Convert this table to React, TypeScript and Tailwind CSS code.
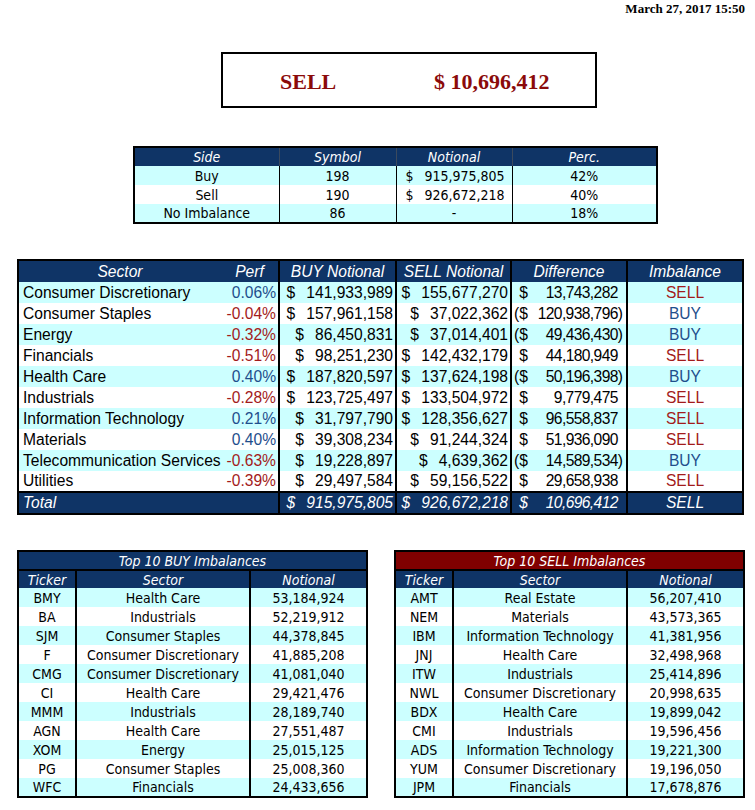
import React from "react";

type SectorRow = {
  sector: string;
  perf: string;
  buy: string;
  sell: string;
  diff: string;
  neg: boolean;
  side: "BUY" | "SELL";
};

const sectors: SectorRow[] = [
  { sector: "Consumer Discretionary", perf: "0.06%", buy: "141,933,989", sell: "155,677,270", diff: "13,743,282", neg: false, side: "SELL" },
  { sector: "Consumer Staples", perf: "-0.04%", buy: "157,961,158", sell: "37,022,362", diff: "120,938,796", neg: true, side: "BUY" },
  { sector: "Energy", perf: "-0.32%", buy: "86,450,831", sell: "37,014,401", diff: "49,436,430", neg: true, side: "BUY" },
  { sector: "Financials", perf: "-0.51%", buy: "98,251,230", sell: "142,432,179", diff: "44,180,949", neg: false, side: "SELL" },
  { sector: "Health Care", perf: "0.40%", buy: "187,820,597", sell: "137,624,198", diff: "50,196,398", neg: true, side: "BUY" },
  { sector: "Industrials", perf: "-0.28%", buy: "123,725,497", sell: "133,504,972", diff: "9,779,475", neg: false, side: "SELL" },
  { sector: "Information Technology", perf: "0.21%", buy: "31,797,790", sell: "128,356,627", diff: "96,558,837", neg: false, side: "SELL" },
  { sector: "Materials", perf: "0.40%", buy: "39,308,234", sell: "91,244,324", diff: "51,936,090", neg: false, side: "SELL" },
  { sector: "Telecommunication Services", perf: "-0.63%", buy: "19,228,897", sell: "4,639,362", diff: "14,589,534", neg: true, side: "BUY" },
  { sector: "Utilities", perf: "-0.39%", buy: "29,497,584", sell: "59,156,522", diff: "29,658,938", neg: false, side: "SELL" },
];

const topBuy = [
  ["BMY", "Health Care", "53,184,924"],
  ["BA", "Industrials", "52,219,912"],
  ["SJM", "Consumer Staples", "44,378,845"],
  ["F", "Consumer Discretionary", "41,885,208"],
  ["CMG", "Consumer Discretionary", "41,081,040"],
  ["CI", "Health Care", "29,421,476"],
  ["MMM", "Industrials", "28,189,740"],
  ["AGN", "Health Care", "27,551,487"],
  ["XOM", "Energy", "25,015,125"],
  ["PG", "Consumer Staples", "25,008,360"],
  ["WFC", "Financials", "24,433,656"],
];

const topSell = [
  ["AMT", "Real Estate", "56,207,410"],
  ["NEM", "Materials", "43,573,365"],
  ["IBM", "Information Technology", "41,381,956"],
  ["JNJ", "Health Care", "32,498,968"],
  ["ITW", "Industrials", "25,414,896"],
  ["NWL", "Consumer Discretionary", "20,998,635"],
  ["BDX", "Health Care", "19,899,042"],
  ["CMI", "Industrials", "19,596,456"],
  ["ADS", "Information Technology", "19,221,300"],
  ["YUM", "Consumer Discretionary", "19,196,050"],
  ["JPM", "Financials", "17,678,876"],
];

// $  digits, pushed right
function Money({ value }: { value: string }) {
  return (
    <div className="flex justify-end whitespace-pre pr-[2px]">
      <span className="mr-[11px]">$</span>
      <span>{value}</span>
    </div>
  );
}

// accounting layout: ($ on the left, digits right, room kept for the closing paren
function Diff({ value, neg = false }: { value: string; neg?: boolean }) {
  return (
    <div className="flex whitespace-pre pl-[2px] pr-[3px]">
      <span className={neg ? "" : "invisible"}>(</span>
      <span>$</span>
      <span className="flex-1 text-right tracking-[-0.6px]">{value}</span>
      <span className={neg ? "" : "invisible"}>)</span>
    </div>
  );
}

function TopTable({ title, rows, red }: { title: string; rows: string[][]; red?: boolean }) {
  return (
    <table className="w-[349px] table-fixed border-collapse border-2 border-black font-['DejaVu_Sans_Condensed','DejaVu_Sans',sans-serif] font-stretch-condensed text-[14px] leading-none text-black">
      <colgroup>
        <col className="w-[58px]" />
        <col className="w-[174px]" />
        <col className="w-[117px]" />
      </colgroup>
      <thead>
        <tr className={red ? "h-[19px] bg-[#800000]" : "h-[19px] bg-[#0f3466]"}>
          <th colSpan={3} className="border-b-2 border-black p-0 text-center font-normal italic text-white">
            {title}
          </th>
        </tr>
        <tr className="h-[18px] bg-[#0f3466] text-white">
          <th className="p-0 text-center font-normal italic">Ticker</th>
          <th className="border-l-2 border-black p-0 text-center font-normal italic">Sector</th>
          <th className="border-l-2 border-black p-0 text-center font-normal italic">Notional</th>
        </tr>
      </thead>
      <tbody>
        {rows.map((r, i) => (
          <tr key={r[0]} className={i % 2 === 0 ? "h-[19px] bg-[#ccffff]" : "h-[19px] bg-white"}>
            <td className="p-0 text-center">{r[0]}</td>
            <td className="border-l-2 border-black p-0 text-center whitespace-nowrap">{r[1]}</td>
            <td className="border-l-2 border-black p-0 text-center">{r[2]}</td>
          </tr>
        ))}
      </tbody>
    </table>
  );
}

export default function App() {
  return (
    <div className="w-[755px] min-h-[810px] bg-white">
      <div className="pr-[10px] pt-[1px] text-right font-['Liberation_Serif','Times_New_Roman',serif] text-[13px] font-bold leading-[15px] text-black">
        March 27, 2017 15:50
      </div>

      <div className="ml-[221px] mt-[36px] flex h-[56px] w-[376px] items-center border-2 border-black pt-[3px] font-['Liberation_Serif','Times_New_Roman',serif] text-[22px] font-bold text-[#8b0a0a]">
        <span className="ml-[57px] w-[154px]">SELL</span>
        <span className="whitespace-pre">$ 10,696,412</span>
      </div>

      <table className="ml-[133px] mt-[38px] w-[523px] table-fixed border-collapse border-2 border-black font-['DejaVu_Sans_Condensed','DejaVu_Sans',sans-serif] font-stretch-condensed text-[14px] leading-none text-black">
        <colgroup>
          <col className="w-[145px]" />
          <col className="w-[117px]" />
          <col className="w-[116px]" />
          <col className="w-[145px]" />
        </colgroup>
        <thead>
          <tr className="h-[19px] bg-[#0f3466] text-white">
            <th className="p-0 text-center font-normal italic">Side</th>
            <th className="border-l border-[#3b4a5e] p-0 text-center font-normal italic">Symbol</th>
            <th className="border-l border-[#3b4a5e] p-0 text-center font-normal italic">Notional</th>
            <th className="border-l border-[#3b4a5e] p-0 text-center font-normal italic">Perc.</th>
          </tr>
        </thead>
        <tbody>
          {[
            ["Buy", "198", "915,975,805", "42%"],
            ["Sell", "190", "926,672,218", "40%"],
            ["No Imbalance", "86", "", "18%"],
          ].map((r, i) => (
            <tr key={r[0]} className={i % 2 === 0 ? "h-[19px] bg-[#ccffff]" : "h-[19px] bg-white"}>
              <td className="p-0 text-center">{r[0]}</td>
              <td className="border-l border-black p-0 text-center">{r[1]}</td>
              <td className="border-l border-black p-0">
                {r[2] ? (
                  <div className="flex justify-between pl-[9px] pr-[7px]">
                    <span>$</span>
                    <span>{r[2]}</span>
                  </div>
                ) : (
                  <div className="text-center">-</div>
                )}
              </td>
              <td className="border-l border-black p-0 text-center">{r[3]}</td>
            </tr>
          ))}
        </tbody>
      </table>

      <table className="ml-[17px] mt-[35px] w-[725px] table-fixed border-collapse border-2 border-black font-['Liberation_Sans',Arial,sans-serif] text-[15.6px] leading-none text-black">
        <colgroup>
          <col className="w-[203px]" />
          <col className="w-[58px]" />
          <col className="w-[117px]" />
          <col className="w-[115px]" />
          <col className="w-[116px]" />
          <col className="w-[116px]" />
        </colgroup>
        <thead>
          <tr className="h-[22px] bg-[#0f3466] text-white">
            <th className="p-0 text-center font-normal italic">Sector</th>
            <th className="p-0 text-center font-normal italic">Perf</th>
            <th className="border-l-2 border-black p-0 text-center font-normal italic">BUY Notional</th>
            <th className="border-l-2 border-black p-0 text-center font-normal italic">SELL Notional</th>
            <th className="border-l-2 border-black p-0 text-center font-normal italic">Difference</th>
            <th className="border-l-2 border-black p-0 text-center font-normal italic">Imbalance</th>
          </tr>
        </thead>
        <tbody>
          {sectors.map((s, i) => (
            <tr key={s.sector} className={i % 2 === 0 ? "h-[21px] bg-[#ccffff]" : "h-[21px] bg-white"}>
              <td className="overflow-hidden whitespace-nowrap p-0 pl-[4px]">{s.sector}</td>
              <td className={s.perf.startsWith("-") ? "p-0 pr-[2px] text-right text-[#a31b1b]" : "p-0 pr-[2px] text-right text-[#1f4e8c]"}>
                {s.perf}
              </td>
              <td className="border-l-2 border-black p-0">
                <Money value={s.buy} />
              </td>
              <td className="border-l-2 border-black p-0">
                <Money value={s.sell} />
              </td>
              <td className="border-l-2 border-black p-0">
                <Diff value={s.diff} neg={s.neg} />
              </td>
              <td className={s.side === "SELL" ? "border-l-2 border-black p-0 text-center text-[#a31b1b]" : "border-l-2 border-black p-0 text-center text-[#1f4e8c]"}>
                {s.side}
              </td>
            </tr>
          ))}
          <tr className="h-[22px] border-t-2 border-black bg-[#0f3466] italic text-white">
            <td colSpan={2} className="p-0 pl-[4px]">Total</td>
            <td className="border-l-2 border-black p-0">
              <Money value="915,975,805" />
            </td>
            <td className="border-l-2 border-black p-0">
              <Money value="926,672,218" />
            </td>
            <td className="border-l-2 border-black p-0">
              <Diff value="10,696,412" />
            </td>
            <td className="border-l-2 border-black p-0 text-center">SELL</td>
          </tr>
        </tbody>
      </table>

      <div className="ml-[17px] mt-[35px] flex gap-[26px]">
        <TopTable title="Top 10 BUY Imbalances" rows={topBuy} />
        <TopTable title="Top 10 SELL Imbalances" rows={topSell} red />
      </div>
    </div>
  );
}
